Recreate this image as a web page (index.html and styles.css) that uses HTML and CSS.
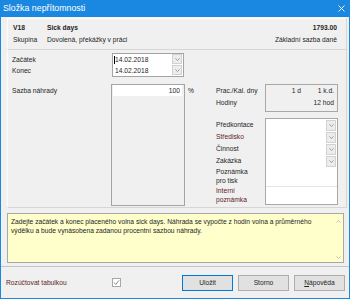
FILE: index.html
```
<!DOCTYPE html>
<html lang="cs">
<head>
<meta charset="utf-8">
<title>Složka nepřítomnosti</title>
<link rel="stylesheet" href="styles.css">
</head>
<body>
<div class="titlebar">
  <span class="title">Složka nepřítomnosti</span>
  <svg class="close" width="7" height="7" viewBox="0 0 7 7"><path d="M0.5 0.5 L6.5 6.5 M6.5 0.5 L0.5 6.5" stroke="#fff" stroke-width="0.9" fill="none"/></svg>
</div>
<div class="frame">
  <div class="header">
    <div class="hrow"><span class="c1 b">V18</span><span class="c2 b">Sick days</span><span class="c3 b">1793.00</span></div>
    <div class="hrow"><span class="c1">Skupina</span><span class="c2">Dovolená, překážky v práci</span><span class="c3">Základní sazba daně</span></div>
  </div>
  <div class="main">
    <div class="dates">
      <div class="dlabels">
        <div class="drow">Začátek</div>
        <div class="drow">Konec</div>
      </div>
      <div class="datebox">
        <div class="dcell"><span class="dtext"><span class="caret"></span>14.02.2018</span><span class="dd"><svg width="5" height="3" viewBox="0 0 5 3"><path d="M0.4 0.4 L2.5 2.5 L4.6 0.4" fill="none" stroke="#8a8a8a" stroke-width="0.8"/></svg></span></div>
        <div class="dcell"><span class="dtext">14.02.2018</span><span class="dd"><svg width="5" height="3" viewBox="0 0 5 3"><path d="M0.4 0.4 L2.5 2.5 L4.6 0.4" fill="none" stroke="#8a8a8a" stroke-width="0.8"/></svg></span></div>
      </div>
    </div>
    <div class="lower">
      <div class="lcol"><div class="lab">Sazba náhrady</div></div>
      <div class="sazba"><div class="sinput">100</div></div>
      <div class="pct">%</div>
      <div class="rcol">
        <div class="rblock">
          <div class="rlabels">
            <div class="lab">Prac./Kal. dny</div>
            <div class="lab">Hodiny</div>
          </div>
          <div class="pracbox">
            <div class="prow"><span>1 d</span><span class="kd">1 k.d.</span></div>
            <div class="prow"><span>12 hod</span></div>
          </div>
        </div>
        <div class="rblock rblock2">
          <div class="rlabels">
            <div class="lab">Předkontace</div>
            <div class="lab red">Středisko</div>
            <div class="lab">Činnost</div>
            <div class="lab">Zakázka</div>
            <div class="lab2 l2a">Poznámka<br>pro tisk</div>
            <div class="lab2 l2b red">Interní<br>poznámka</div>
          </div>
          <div class="lowerbox">
            <div class="brow"><span class="dd"><svg width="5" height="3" viewBox="0 0 5 3"><path d="M0.4 0.4 L2.5 2.5 L4.6 0.4" fill="none" stroke="#8a8a8a" stroke-width="0.8"/></svg></span></div>
            <div class="brow"><span class="dd"><svg width="5" height="3" viewBox="0 0 5 3"><path d="M0.4 0.4 L2.5 2.5 L4.6 0.4" fill="none" stroke="#8a8a8a" stroke-width="0.8"/></svg></span></div>
            <div class="brow"><span class="dd"><svg width="5" height="3" viewBox="0 0 5 3"><path d="M0.4 0.4 L2.5 2.5 L4.6 0.4" fill="none" stroke="#8a8a8a" stroke-width="0.8"/></svg></span></div>
            <div class="brow"><span class="dd"><svg width="5" height="3" viewBox="0 0 5 3"><path d="M0.4 0.4 L2.5 2.5 L4.6 0.4" fill="none" stroke="#8a8a8a" stroke-width="0.8"/></svg></span></div>
            <div class="bnote1"></div>
            <div class="bnote2"></div>
          </div>
        </div>
      </div>
    </div>
  </div>
  <div class="note">
    <div class="ntext">Zadejte začátek a konec placeného volna sick days. Náhrada se vypočte z hodin volna a průměrného<br>výdělku a bude vynásobena zadanou procentní sazbou náhrady.</div>
    <div class="nscroll">
      <svg width="5" height="3" viewBox="0 0 5 3"><path d="M0.4 2.6 L2.5 0.5 L4.6 2.6" fill="none" stroke="#b5b5b5" stroke-width="0.8"/></svg>
      <svg width="5" height="3" viewBox="0 0 5 3"><path d="M0.4 0.4 L2.5 2.5 L4.6 0.4" fill="none" stroke="#b5b5b5" stroke-width="0.8"/></svg>
    </div>
  </div>
  <div class="sep"></div>
  <div class="footer">
    <span class="flabel red">Rozúčtovat tabulkou</span>
    <span class="check"><svg width="7" height="7" viewBox="0 0 7 7"><path d="M1 3.6 L2.8 5.4 L6 1.4" fill="none" stroke="#7a7a7a" stroke-width="0.9"/></svg></span>
    <div class="buttons">
      <span class="btn default">Uložit</span>
      <span class="btn">Storno</span>
      <span class="btn"><u>N</u>ápověda</span>
    </div>
  </div>
</div>
</body>
</html>
```
FILE: styles.css
```
* { box-sizing: border-box; }
html, body { margin: 0; padding: 0; }
body {
  width: 350px;
  height: 299px;
  overflow: hidden;
  background: #f0f0f0;
  font-family: "Liberation Sans", Arial, sans-serif;
  font-size: 6.7px;
  color: #1e1e1e;
}
.titlebar {
  height: 17px;
  background: #1a88e0;
  color: #fff;
  display: flex;
  align-items: center;
  justify-content: space-between;
  padding: 0 5px 2px 3px;
  font-size: 8.8px;
}
.close { display: block; margin-top: 1px; }
.frame {
  height: 282px;
  border: 1px solid #1a88e0;
  border-top: 0;
  padding: 1px 2px 0 6px;
  display: flex;
  flex-direction: column;
}
.header {
  height: 31px;
  border: 1px solid #d6d6d6;
  border-color: #fcfcfc #d6d6d6 #d6d6d6 #fcfcfc;
  border-bottom: 0;
  padding: 3px 9px 0 5px;
}
.hrow { display: flex; height: 12px; line-height: 12px; }
.hrow .c1 { width: 34px; }
.hrow .c2 { flex: 1; }
.b { font-weight: bold; }
.main {
  height: 159px;
  border: 1px solid #d6d6d6;
  border-color: #d6d6d6 #d6d6d6 #d6d6d6 #fcfcfc;
  padding: 3px 0 0 4px;
}
.dates { display: flex; }
.dlabels { width: 100px; padding-top: 1px; }
.drow { height: 11px; line-height: 11px; }
.datebox {
  width: 72px;
  border: 1px solid #a4a4a4;
  background: #fff;
}
.dcell { height: 11px; display: flex; align-items: flex-start; justify-content: space-between; }
.dtext { line-height: 11px; padding-left: 1px; display: flex; align-items: center; }
.caret { display: inline-block; width: 1px; height: 8px; background: #000; margin-right: 0; }
.dtext { padding-left: 2px; }
.dcell:first-child .dtext { padding-left: 1px; }
.dd {
  width: 10px;
  height: 10px;
  margin-right: 1px;
  background: #ececec;
  border: 1px solid #d2d2d2;
  display: flex;
  align-items: center;
  justify-content: center;
}
.dd svg { display: block; }
.lower { display: flex; margin-top: 7px; }
.lcol { width: 99px; padding-top: 1px; }
.lab { height: 12px; line-height: 12px; white-space: nowrap; }
.sazba {
  width: 74px;
  height: 122px;
  border: 1px solid #a4a4a4;
  background: #f0f0f0;
  padding: 0 2px 0 1px;
}
.sinput {
  height: 11px;
  line-height: 11px;
  background: #fff;
  text-align: right;
  padding-right: 2px;
}
.pct { width: 31px; padding: 1px 0 0 3px; line-height: 12px; }
.rcol { display: flex; flex-direction: column; }
.rblock { display: flex; }
.rblock2 { margin-top: 6px; }
.rlabels { width: 49px; padding-top: 1px; }
.lab2 { white-space: nowrap; }
.l2a { height: 20px; line-height: 9px; }
.l2b { height: 17px; line-height: 8.5px; }
.red { color: #5e1c28; }
.pracbox {
  width: 73px;
  height: 28px;
  border: 1px solid #a8a8a8;
  background: #f0f0f0;
  padding-right: 3px;
}
.prow { height: 12px; line-height: 12px; display: flex; justify-content: flex-end; }
.kd { width: 33px; text-align: right; }
.lowerbox {
  width: 73px;
  height: 87px;
  border: 1px solid #a8a8a8;
  background: #fff;
}
.brow { height: 12px; display: flex; justify-content: flex-end; align-items: flex-start; padding-top: 1px; }
.brow .dd { height: 11px; }
.brow:first-child { padding-top: 1px; }
.bnote1 { height: 20px; border-bottom: 1px solid #e4e4e4; }
.bnote2 { height: 17px; }
.note {
  margin-top: 5px;
  margin-right: 3px;
  height: 50px;
  border: 1px solid #a8a8a8;
  background: #ffffcc;
  display: flex;
}
.ntext {
  flex: 1;
  padding: 3px 0 0 3px;
  line-height: 9px;
  white-space: nowrap;
}
.nscroll {
  width: 9px;
  display: flex;
  flex-direction: column;
  justify-content: space-between;
  align-items: center;
  padding: 6px 0 3px;
}
.nscroll svg { display: block; }
.sep {
  margin: 3px -2px 0 -6px;
  border-top: 1px solid #c4c4c4;
}
.footer {
  margin: 0 -2px 0 -6px;
  padding-left: 5px;
  height: 31px;
  display: flex;
  align-items: center;
}
.flabel { width: 106px; white-space: nowrap; }
.check {
  width: 9px;
  height: 9px;
  border: 1px solid #a8a8a8;
  background: #fff;
  display: flex;
  align-items: center;
  justify-content: center;
}
.check svg { display: block; }
.buttons { display: flex; gap: 5px; margin-left: 61px; }
.btn {
  width: 51px;
  height: 16px;
  border: 1px solid #adadad;
  background: #e1e1e1;
  display: flex;
  align-items: center;
  justify-content: center;
}
.btn.default { border-color: #0078d7; }
.btn u { text-decoration: underline; }
```
